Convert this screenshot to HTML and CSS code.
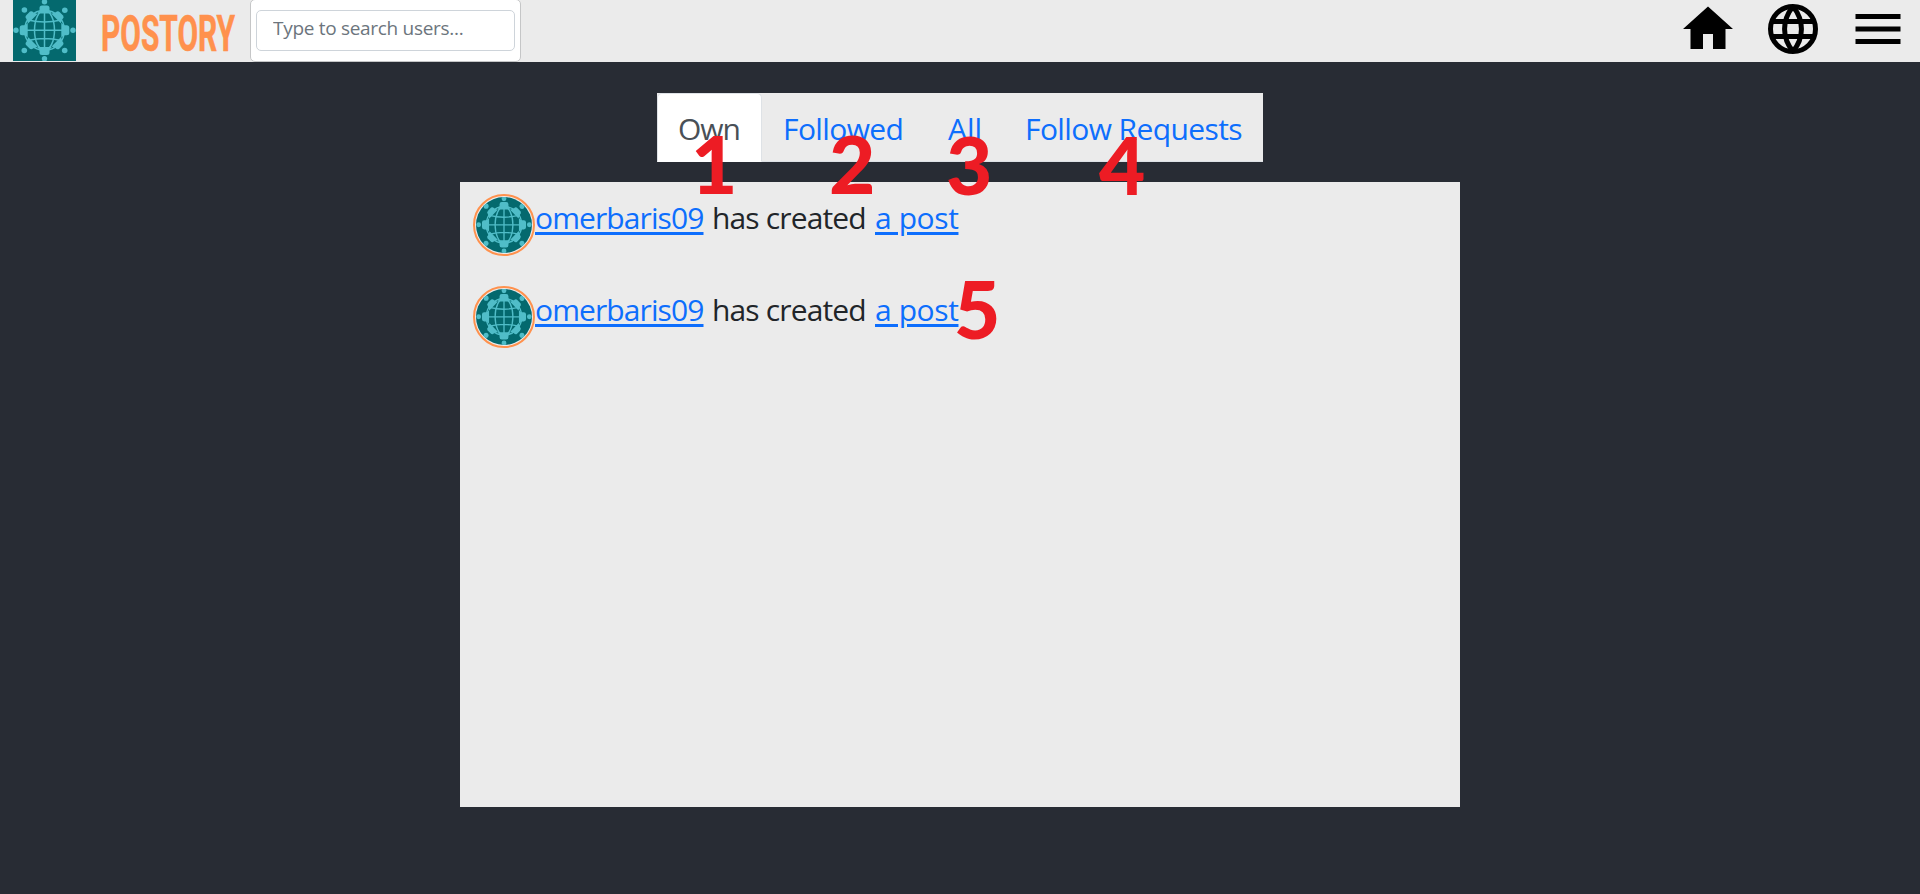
FILE: index.html
```html
<!DOCTYPE html>
<html lang="en">
<head>
<meta charset="utf-8">
<title>Postory</title>
<link rel="stylesheet" href="styles.css">
</head>
<body>
<svg class="defs" aria-hidden="true">
  <symbol id="logo" viewBox="0 0 63 61" preserveAspectRatio="none">
    <rect width="63" height="61" fill="#04696e"/>
    <g fill="none" stroke="#50bdc8" stroke-width="1.5">
      <circle cx="31.5" cy="30.3" r="20"/>
      <ellipse cx="31.5" cy="30.3" rx="10" ry="20"/>
      <path d="M31.500 11v38.600M12 30.300h39M15 20q16.500 4 33 0M15 40.600q16.500-4 33 0"/>
    </g>
    <g fill="#50bdc8">
      <g id="pair">
        <circle cx="31.5" cy="1.8" r="2.7"/>
        <path d="M29 5.500h5q2.500 0 2.500 2.500v3l2.500 2.500h-15l2.500-2.500v-3q0-2.500 2.500-2.500z"/>
        <circle cx="31.500" cy="58.800" r="2.700"/>
        <path d="M29 55.100h5q2.500 0 2.500-2.500v-3l2.500-2.500h-15l2.500 2.500v3q0 2.500 2.500 2.500z"/>
      </g>
      <use href="#pair" transform="rotate(90 31.5 30.3)"/>
      <g id="diag">
        <circle cx="11.400" cy="10" r="2.800"/>
        <circle cx="51.700" cy="50.500" r="2.800"/>
        <path d="M13.500 15l3.500-3.500q2-1 3.500 1l4 1.500-9.500 9.500-1.500-4.500q-2-2 0-4z"/>
        <path d="M49.500 45.500l-3.500 3.500q-2 1-3.500-1l-4-1.500 9.500-9.500 1.500 4.500q2 2 0 4z"/>
      </g>
      <use href="#diag" transform="rotate(90 31.5 30.3)"/>
    </g>
  </symbol>
</svg>

<header class="navbar">
  <svg class="logo"><use href="#logo"/></svg>
  <svg class="brand" width="136" height="62"><text x="0" y="51" textLength="134" lengthAdjust="spacingAndGlyphs">POSTORY</text></svg>
  <div class="search"><input class="search-input" type="text" placeholder="Type to search users..."></div>
  <nav class="actions">
    <svg viewBox="0 0 24 24"><path d="M10 20v-6h4v6h5v-8h3L12 3 2 12h3v8z"/></svg>
    <svg viewBox="0 0 24 24"><g fill="none" stroke="#000" stroke-width="2"><circle cx="12" cy="12" r="9"/><path d="M3.500 9h17M3.500 15h17M12 3C7.500 8.500 7.500 15.500 12 21M12 3c4.500 5.500 4.500 12.500 0 18"/></g></svg>
    <svg viewBox="0 0 24 24"><path d="M3 18h18v-2H3zM3 13h18v-2H3zM3 6v2h18V6z"/></svg>
  </nav>
</header>

<main class="page">
  <ul class="tabs">
    <li class="tab active own">Own<b class="mark m1">1</b></li>
    <li class="tab followed">Followed<b class="mark m2">2</b></li>
    <li class="tab all">All<b class="mark m3">3</b></li>
    <li class="tab requests">Follow Requests<b class="mark m4">4</b></li>
  </ul>
  <section class="feed">
    <div class="entry">
      <svg class="avatar"><use href="#logo"/></svg>
      <p class="line"><a class="user">omerbaris09</a><span class="verb">has created</span><a class="post">a post</a></p>
    </div>
    <div class="entry">
      <svg class="avatar"><use href="#logo"/></svg>
      <p class="line"><a class="user">omerbaris09</a><span class="verb">has created</span><a class="post">a post</a><b class="mark m5">5</b></p>
    </div>
  </section>
</main>
</body>
</html>
```
FILE: styles.css
```css
* { box-sizing: border-box; }
body {
  margin: 0;
  min-height: 894px;
  background: #282c34;
  color: #212529;
  font-family: "Open Sans", "Noto Sans", sans-serif;
}
.defs { position: absolute; width: 0; height: 0; }

.navbar {
  display: flex;
  align-items: flex-start;
  height: 62px;
  padding: 0 12px 0 13px;
  background: #ebebeb;
}
.logo { width: 63px; height: 61px; }
.brand { margin-left: 25px; overflow: visible; }
.brand text { font: 700 50px Roboto, sans-serif; fill: #ff914d; stroke: #ff914d; stroke-width: 0.6px; }
.search {
  width: 271px;
  height: 63px;
  margin: -1px 0 0 13px;
  padding: 10px 5px;
  background: #fff;
  border: 1px solid #c5c6c7;
  border-radius: 5px;
}
.search-input {
  display: block;
  width: 100%;
  height: 41px;
  padding: 0 16px 5px;
  border: 1px solid #ced4da;
  border-radius: 5px;
  background: #fff;
  font: 19px "Open Sans", "Noto Sans", sans-serif;
  letter-spacing: -0.3px;
}
.search-input::placeholder { color: #6c757d; opacity: 1; }
.actions { display: flex; gap: 25px; margin: -1px 0 0 auto; }
.actions svg { width: 60px; height: 60px; }

.page { display: flex; flex-direction: column; align-items: center; padding-top: 31px; }
.tabs {
  display: flex;
  width: 606px;
  height: 69px;
  margin: 0 0 20px;
  padding: 0;
  list-style: none;
  background: #ebebeb;
  border-bottom: 1px solid #dee2e6;
}
.tab {
  position: relative;
  height: 69px;
  padding-left: 20px;
  border: 1px solid transparent;
  line-height: 69px;
  font-size: 30px;
  color: #0d6efd;
  white-space: nowrap;
}
.active { background: #fff; border-color: #dee2e6 #dee2e6 #fff; border-radius: 5px 5px 0 0; color: #495057; }
.own { width: 105px; letter-spacing: -1px; }
.followed { width: 163px; letter-spacing: -0.600px; }
.all { width: 77px; padding-left: 22px; letter-spacing: 0; }
.requests { width: 261px; padding-left: 22px; letter-spacing: -0.600px; }

.feed { width: 1000px; height: 625px; padding: 12px 13px; background: #ebebeb; }
.entry { display: flex; height: 92px; }
.avatar { width: 62px; height: 62px; padding: 1px; border: 2px solid #ff914d; border-radius: 50%; }
.line { position: relative; display: flex; margin: 0; font-size: 30px; line-height: 48px; white-space: nowrap; }
.line a { align-self: flex-start; color: #0d6efd; text-decoration: underline; text-decoration-thickness: 3px; text-underline-offset: 3px; }
.user { width: 177px; letter-spacing: -0.900px; }
.verb { width: 163px; letter-spacing: -0.850px; }
.post { width: 83px; letter-spacing: -0.400px; }

.mark {
  position: absolute;
  z-index: 2;
  width: 46px;
  text-align: center;
  font: 900 80px/80px Lato, sans-serif;
  letter-spacing: 0;
  color: #ed1c24;
}
.m1 { left: 33px; top: 29px; }
.m2 { left: 66px; top: 29px; }
.m3 { left: 20px; top: 30px; }
.m4 { left: 96px; top: 30px; }
.m5 { left: 419px; top: -18px; }
```
